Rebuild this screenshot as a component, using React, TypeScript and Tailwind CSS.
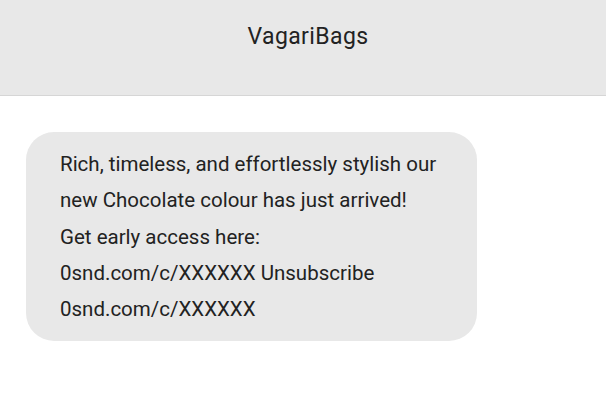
const lines = [
  "Rich, timeless, and effortlessly stylish our",
  "new Chocolate colour has just arrived!",
  "Get early access here:",
  "0snd.com/c/XXXXXX Unsubscribe",
  "0snd.com/c/XXXXXX",
];

export default function App() {
  return (
    <div className="min-h-screen bg-white font-['Roboto',sans-serif] text-[#222]">
      <header className="flex h-[96px] justify-center border-b border-[#d6d6d6] bg-[#e8e8e8] pl-[10px] pt-[21px]">
        <h1 className="text-[23px] leading-[32px] tracking-[0.4px]">VagariBags</h1>
      </header>
      <div className="px-[26px] pt-[36px]">
        <div className="w-[451px] rounded-[28px] bg-[#e8e8e8] px-[34px] py-[14px] text-[20.5px] leading-[36.3px]">
          {lines.map((line) => (
            <div key={line} className="whitespace-nowrap">
              {line}
            </div>
          ))}
        </div>
      </div>
    </div>
  );
}
